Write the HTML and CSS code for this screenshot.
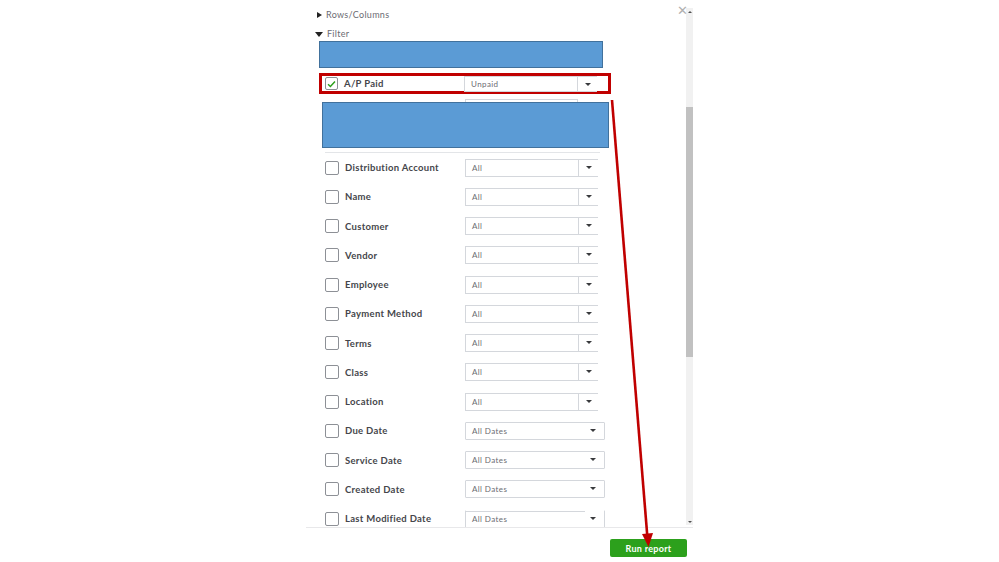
FILE: index.html
```html
<!DOCTYPE html>
<html>
<head>
<meta charset="utf-8">
<link rel="stylesheet" href="styles.css">
</head>
<body>
<div class="page">
  <div class="panel">
    <div class="body">
      <div class="content">
        <div class="section"><span class="tri tri-right"></span>Rows/Columns</div>
        <div class="section"><span class="tri tri-down"></span>Filter</div>
        <div class="blue blue-top"></div>
        <div class="row row-marked">
          <span class="check checked"><svg viewBox="0 0 12 12" width="12" height="12"><path d="M2.2 6.3 L4.8 8.8 L9.8 3.2" fill="none" stroke="#2ca01c" stroke-width="1.6"/></svg></span>
          <span class="label">A/P Paid</span>
          <span class="select"><span class="val">Unpaid</span><span class="arrow"></span></span>
        </div>
        <div class="hidden-group">
          <span class="select select-short"></span>
          <div class="blue blue-mid"></div>
        </div>
        <div class="row"><span class="check"></span><span class="label">Distribution Account</span><span class="select"><span class="val">All</span><span class="arrow"></span></span></div>
        <div class="row"><span class="check"></span><span class="label">Name</span><span class="select"><span class="val">All</span><span class="arrow"></span></span></div>
        <div class="row"><span class="check"></span><span class="label">Customer</span><span class="select"><span class="val">All</span><span class="arrow"></span></span></div>
        <div class="row"><span class="check"></span><span class="label">Vendor</span><span class="select"><span class="val">All</span><span class="arrow"></span></span></div>
        <div class="row"><span class="check"></span><span class="label">Employee</span><span class="select"><span class="val">All</span><span class="arrow"></span></span></div>
        <div class="row"><span class="check"></span><span class="label">Payment Method</span><span class="select"><span class="val">All</span><span class="arrow"></span></span></div>
        <div class="row"><span class="check"></span><span class="label">Terms</span><span class="select"><span class="val">All</span><span class="arrow"></span></span></div>
        <div class="row"><span class="check"></span><span class="label">Class</span><span class="select"><span class="val">All</span><span class="arrow"></span></span></div>
        <div class="row"><span class="check"></span><span class="label">Location</span><span class="select"><span class="val">All</span><span class="arrow"></span></span></div>
        <div class="row"><span class="check"></span><span class="label">Due Date</span><span class="select date"><span class="val">All Dates</span><span class="arrow"></span></span></div>
        <div class="row"><span class="check"></span><span class="label">Service Date</span><span class="select date"><span class="val">All Dates</span><span class="arrow"></span></span></div>
        <div class="row"><span class="check"></span><span class="label">Created Date</span><span class="select date"><span class="val">All Dates</span><span class="arrow"></span></span></div>
        <div class="row"><span class="check"></span><span class="label">Last Modified Date</span><span class="select date last"><span class="val">All Dates</span><span class="arrow"></span></span></div>
      </div>
      <div class="scrollbar">
        <span class="sb-up"></span>
        <span class="sb-thumb"></span>
        <span class="sb-down"></span>
      </div>
      <span class="close">&#x2715;</span>
    </div>
    <div class="footer">
      <button class="run">Run report</button>
    </div>
  </div>
  <svg class="annot-arrow" width="999" height="562" viewBox="0 0 999 562">
    <line x1="612" y1="100" x2="647.3" y2="536" stroke="#c00000" stroke-width="2.6"/>
    <polygon points="642,534 653,533 648.5,547" fill="#c00000"/>
  </svg>
</div>
</body>
</html>
```

FILE: styles.css
```css
* { box-sizing: border-box; }
html, body { margin: 0; padding: 0; background: #fff; }
body { font-family: "Lato", "Open Sans", "Liberation Sans", sans-serif; color: #393a3d; }

.page { position: relative; width: 999px; height: 562px; padding-left: 306px; overflow: hidden; }

.panel { width: 387px; height: 562px; display: flex; flex-direction: column; }

.body { position: relative; height: 527px; display: flex; }

.content { width: 380px; padding-top: 7px; overflow: hidden; }

.section { height: 16px; line-height: 16px; font-size: 9px; color: #6b6c72; padding-left: 8px; display: flex; align-items: center; letter-spacing: 0.3px; }
.section + .section { margin-top: 3px; }
.tri { width: 0; height: 0; margin-right: 4px; }
.tri-right { border-top: 3.5px solid transparent; border-bottom: 3.5px solid transparent; border-left: 5px solid #222; margin-left: 3px; margin-right: 4px; }
.tri-down { border-left: 4px solid transparent; border-right: 4px solid transparent; border-top: 5px solid #222; margin-left: 1px; margin-right: 4px; }

.blue { background: #5b9bd5; border: 1px solid #41719c; }
.blue-top { margin-top: -1px; margin-left: 13px; width: 284px; height: 27px; }

.row { height: 29.25px; display: flex; align-items: center; padding-left: 19px; }
.row-marked { margin-top: 5px; margin-left: 13px; width: 292px; height: 21px; border: 3px solid #c00000; padding-left: 3px; }
.row-marked .select { height: 16px; margin-top: 0; }

.check { width: 14px; height: 14px; border: 1px solid #8d9096; border-radius: 2px; background: #fff; flex: none; display: flex; align-items: center; justify-content: center; }
.row-marked .check { width: 13px; height: 13px; }

.label { width: 120px; margin-left: 6px; font-size: 9.5px; font-weight: 700; color: #45464b; white-space: nowrap; letter-spacing: 0.3px; }

.select { width: 133px; height: 18px; border: 1px solid #d4d7dc; border-right: none; display: flex; align-items: center; font-size: 8px; color: #6b6c72; background: #fff; }
.val { flex: 1; padding-left: 6px; letter-spacing: 0.4px; }
.arrow { width: 20px; height: 100%; border-left: 1px solid #d4d7dc; position: relative; }
.arrow::after { content: ""; position: absolute; left: 7px; top: 6px; border-left: 3px solid transparent; border-right: 3px solid transparent; border-top: 3px solid #393a3d; }

.select.date { width: 140px; border-right: 1px solid #d4d7dc; border-radius: 1px; }
.select.date .arrow { border-left: none; }
.select.date .arrow::after { left: 6px; }
.select.last { border-top-color: transparent; background: linear-gradient(#d4d7dc, #d4d7dc) top left / 119px 1px no-repeat, #fff; }

.hidden-group { position: relative; height: 59px; margin-left: 19px; width: 275px; border-bottom: 1px solid #e3e5e8; padding-top: 5px; padding-left: 140px; }
.select-short { display: block; width: 113px; height: 18px; border: 1px solid #d4d7dc; }
.blue-mid { position: absolute; left: -3px; top: 8px; width: 287px; height: 46px; }

.scrollbar { width: 7px; margin-top: 8px; height: 517px; background: #f1f1f1; position: relative; }
.sb-thumb { position: absolute; left: 0; top: 99px; width: 7px; height: 250px; background: #c1c1c1; }
.sb-up { position: absolute; left: 2px; top: 3px; border-left: 2px solid transparent; border-right: 2px solid transparent; border-bottom: 2px solid #505050; }
.sb-down { position: absolute; left: 2px; bottom: 2px; border-left: 2px solid transparent; border-right: 2px solid transparent; border-top: 2px solid #505050; }

.close { position: absolute; left: 371px; top: 3px; font-size: 13px; color: #b0b0b0; font-family: "DejaVu Sans", sans-serif; line-height: 15px; font-weight: 300; }

.footer { height: 35px; border-top: 1px solid #e8e8ea; display: flex; justify-content: flex-end; align-items: flex-start; padding-top: 11px; padding-right: 6px; }
.run { width: 77px; height: 18px; background: #2ca01c; color: #fff; border: none; border-radius: 2px; font-family: "Lato", "Liberation Sans", sans-serif; font-weight: 700; font-size: 9px; padding: 0; letter-spacing: 0.3px; }

.annot-arrow { position: absolute; left: 0; top: 0; pointer-events: none; }
```
